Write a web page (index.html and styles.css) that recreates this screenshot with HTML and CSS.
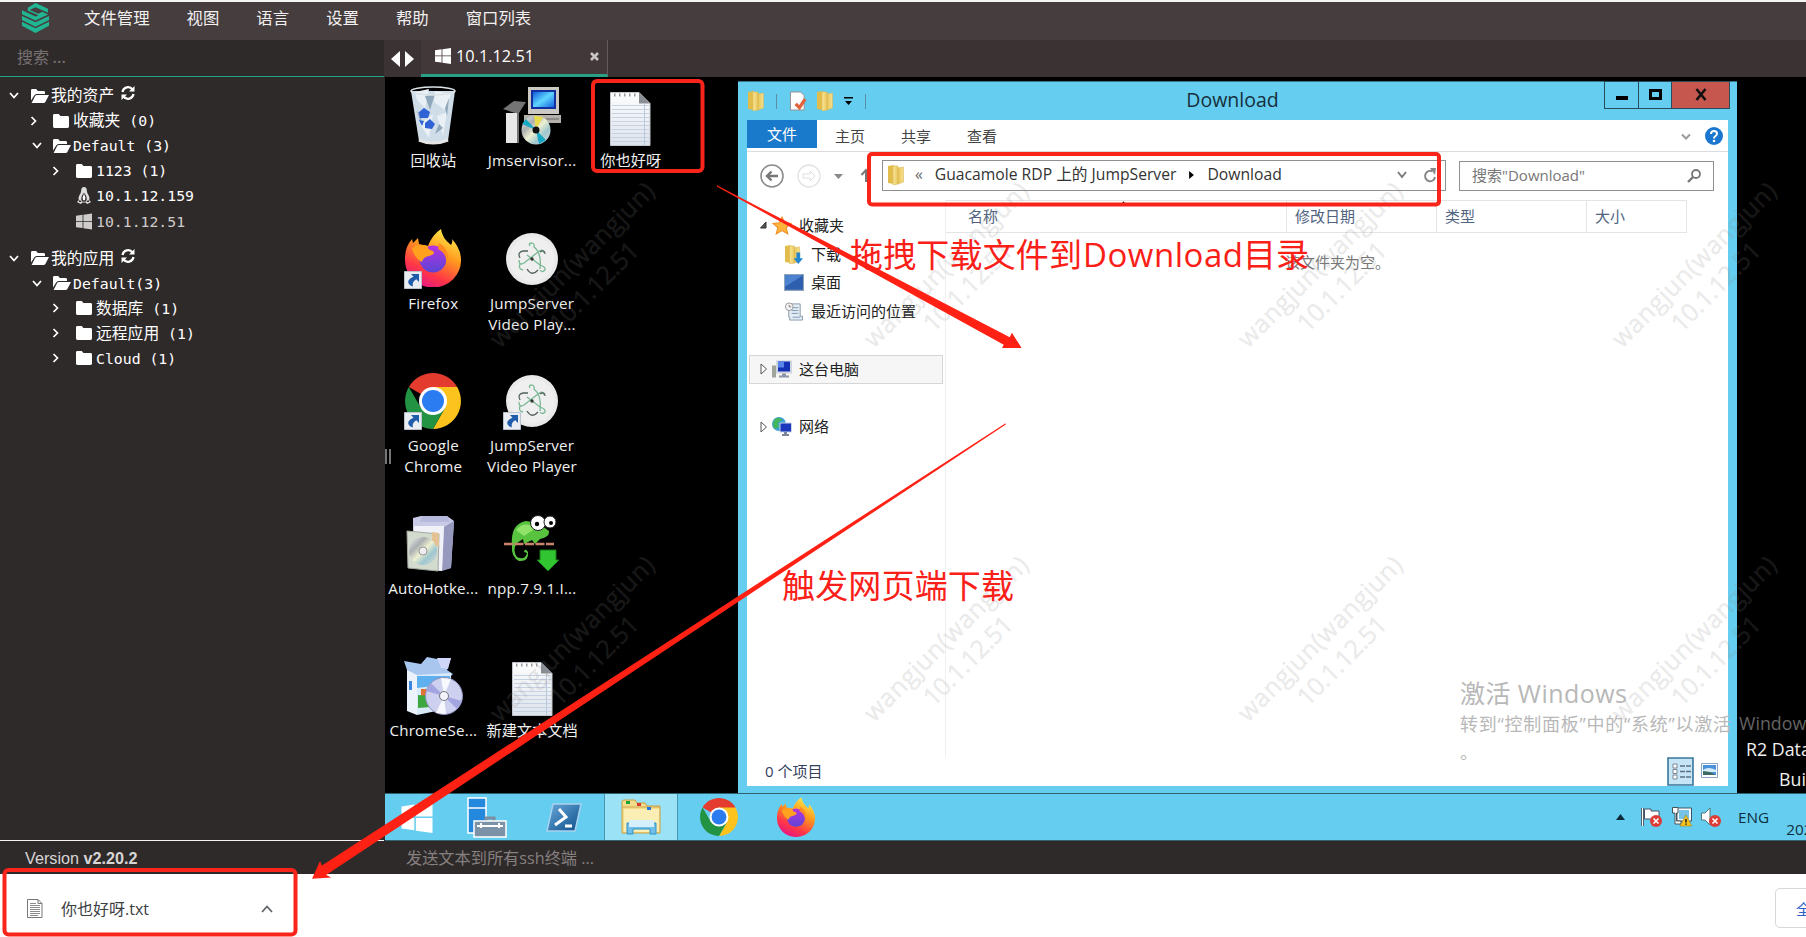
FILE: index.html
```html
<!DOCTYPE html>
<html lang="zh-CN">
<head>
<meta charset="utf-8">
<title>JumpServer Luna</title>
<link rel="stylesheet" href="styles.css">
</head>
<body>
<svg class="defs" width="0" height="0" aria-hidden="true">
  <defs>
    <linearGradient id="gFire" x1=".8" y1="0" x2=".3" y2="1"><stop offset="0" stop-color="#fff44f"/><stop offset=".4" stop-color="#ff9a1e"/><stop offset=".75" stop-color="#ff3647"/><stop offset="1" stop-color="#e31587"/></linearGradient>
    <linearGradient id="gGlobe" x1="0" y1="0" x2="0" y2="1"><stop offset="0" stop-color="#b833e1"/><stop offset="1" stop-color="#5a45d6"/></linearGradient>
    <linearGradient id="gFold" x1="0" y1="0" x2="1" y2="0"><stop offset="0" stop-color="#f8e69a"/><stop offset=".5" stop-color="#e9c658"/><stop offset="1" stop-color="#f6e093"/></linearGradient>
    <linearGradient id="gPaper" x1="0" y1="0" x2="0" y2="1"><stop offset="0" stop-color="#fdfdfd"/><stop offset="1" stop-color="#dde3ec"/></linearGradient>
    <linearGradient id="gScreen" x1="0" y1="0" x2="1" y2="1"><stop offset="0" stop-color="#0a50d8"/><stop offset=".5" stop-color="#5fd6ff"/><stop offset="1" stop-color="#0e58dd"/></linearGradient>
    <linearGradient id="gCd" x1="0" y1="0" x2="1" y2="1"><stop offset="0" stop-color="#f4f4f4"/><stop offset=".3" stop-color="#a9aeb0"/><stop offset=".5" stop-color="#eef0d0"/><stop offset=".7" stop-color="#9fc7cf"/><stop offset="1" stop-color="#d9d9d9"/></linearGradient>
    <linearGradient id="gPs" x1="0" y1="0" x2="1" y2="1"><stop offset="0" stop-color="#69a8d8"/><stop offset="1" stop-color="#0c4e8c"/></linearGradient>
    <symbol id="folder" viewBox="0 0 16 14"><path fill="#fff" d="M1.4 0h4.4l1.6 2h7.2q1.4 0 1.4 1.4v9.2q0 1.4-1.4 1.4H1.4Q0 14 0 12.600V1.4Q0 0 1.4 0z"/></symbol>
    <symbol id="folder-open" viewBox="0 0 18 14"><path fill="#fff" d="M0 11.500V1.400Q0 0 1.400 0H5.200L6.800 2H12.500Q14 2 14 3.400V5H5.500Q4 5 3.200 6.500z"/><path fill="#fff" d="M.6 14 4 7.200Q4.600 6 6 6H18L14.500 12.800Q13.900 14 12.500 14z"/></symbol>
    <symbol id="down" viewBox="0 0 10 7"><path d="M1 1l4 4.500L9 1" fill="none" stroke="#fff" stroke-width="1.800"/></symbol>
    <symbol id="right" viewBox="0 0 7 10"><path d="M1 1l4 4-4 4" fill="none" stroke="#fff" stroke-width="1.700"/></symbol>
    <symbol id="refresh" viewBox="0 0 14 14"><path d="M1.500 6A5.600 5.600 0 0 1 11.500 3.500M12.500 8A5.600 5.600 0 0 1 2.500 10.500" fill="none" stroke="#fff" stroke-width="2.200"/><path fill="#fff" d="M13.500 0V5.500H8zM.5 14V8.500H6z"/></symbol>
    <symbol id="win" viewBox="0 0 16 16"><path fill="currentColor" d="M0 2.300 6.600 1.300V7.500H0zM7.400 1.200 16 0V7.500H7.400zM0 8.300H6.600V14.600L0 13.700zM7.400 8.300H16V16L7.400 14.800z"/></symbol>
    <symbol id="shortcut" viewBox="0 0 18 18"><path fill="#e9edf2" stroke="#b9c3ce" d="M.5.5h17v17H.5z"/><path fill="#1f5ca9" d="M7 3h8v8l-2.700-2.700Q7.500 11 9 15.500 3 13.500 4.500 9.500 6 7 9.500 5.800z"/></symbol>
    <symbol id="chrome" viewBox="0 0 56 56"><path fill="#e33b2e" d="M28 28 3.800 14A28 28 0 0 1 52.200 14z"/><path fill="#fcc31e" d="M28 14H52.200A28 28 0 0 1 28 56L40 35z"/><path fill="#229342" d="M3.800 14 16 35 28 42 28 56A28 28 0 0 1 3.800 14z"/><path fill="#229342" d="M16 34 28 42 40 35 28 56z"/><circle cx="28" cy="28" r="14" fill="#fff"/><circle cx="28" cy="28" r="11" fill="#2b7cf0"/></symbol>
    <symbol id="firefox" viewBox="0 0 56 58"><path fill="url(#gFire)" d="M0 29Q0 18 7 10L8 14 13 9 14 15 23 17Q27 6 36 0 37 9 46 16 48 13 47 10 56 20 56 31A28 27 0 0 1 0 32z"/><circle cx="28" cy="30" r="13.500" fill="url(#gGlobe)"/><path fill="#ffa01f" d="M7 19Q14 14 23 17 22 21 28 22 31 25 24 27 18 28 17 33 9 29 7 19z"/><path fill="#ff8b20" d="M34 14Q47 22 41 36 43 25 33 20z"/></symbol>
    <symbol id="electron" viewBox="0 0 52 52"><circle cx="26" cy="26" r="26" fill="#e9e9e9"/><circle cx="26" cy="26" r="22.500" fill="#efefef"/><g fill="none" stroke="#79b894" stroke-width="1.300"><path d="M13 27Q13 33 18 30L32 19Q37 15 38 20M24 13Q22 10 26 10 29 11 28 14 36 20 34 36M17 37Q12 36 14 31M21 22 34 32Q40 34 39 37 36 40 34 37"/></g><g fill="none" stroke="#53635d" stroke-width="1.300"><path d="M14 25Q11 19 17 18L22 18M34 19Q39 16 39 21M21 36Q26 44 32 37"/></g><circle cx="26" cy="26" r="1.700" fill="#333"/></symbol>
    <symbol id="notepad" viewBox="0 0 41 54"><path fill="url(#gPaper)" stroke="#c2c6cc" d="M.5.5H29L40 11.500V53.500H.5z"/><path stroke="#c6d1e2" d="M2 13.500H39M2 17.500H39M2 21.500H39M2 25.500H39M2 29.500H39M2 33.500H39M2 37.500H39M2 41.500H39M2 45.500H39M2 49.500H39"/><path fill="#8a8f96" d="M29 .5 40 11.500H29z"/><path stroke="#b9c7de" d="M34.500 12V53"/><path d="M4 3h23" stroke="#999" stroke-width="3" stroke-dasharray="1.500 3.500"/></symbol>
    <symbol id="xfolder" viewBox="0 0 16 20"><path fill="#e3bd4c" d="M0 1 6 0V19L0 18z"/><path fill="url(#gFold)" stroke="#dcb955" stroke-width=".6" d="M5 1H10V19L5 20zM10 3 15.500 2V17L10 19z"/></symbol>
    <symbol id="err" viewBox="0 0 12 12"><circle cx="6" cy="6" r="6" fill="#dc3b36"/><path d="M3.500 3.500l5 5M8.500 3.500l-5 5" stroke="#fff" stroke-width="1.600"/></symbol>
  </defs>
</svg>

<div class="app">
  <nav class="menubar">
    <svg class="logo" viewBox="0 0 30 31"><g fill="#21b593"><path d="M15 0 28 6 28 10 15 4.500 9 7.200 18 11 22 9 28 12 15 18 1 11.500V7.500L15 14 18 12.700 7 8V5z"/><path d="M1 13.500 15 20 29 13.500V17.500L15 24.500 1 17.500z"/><path d="M1 19.500 15 26 29 19.500V23.500L15 31 1 23.500z"/></g></svg>
    <span>文件管理</span><span>视图</span><span>语言</span><span>设置</span><span>帮助</span><span>窗口列表</span>
  </nav>

  <div class="main">
    <aside class="sidebar">
      <div class="search">搜索 ...</div>
      <div class="tree">
        <div class="row"><svg class="chev"><use href="#down"/></svg><svg class="fo"><use href="#folder-open"/></svg><span>我的资产</span><svg class="rf"><use href="#refresh"/></svg></div>
        <div class="row l1"><svg class="chev r"><use href="#right"/></svg><svg class="fc"><use href="#folder"/></svg><span>收藏夹</span><code>&nbsp;(0)</code></div>
        <div class="row l1"><svg class="chev"><use href="#down"/></svg><svg class="fo"><use href="#folder-open"/></svg><code>Default (3)</code></div>
        <div class="row l2"><svg class="chev r"><use href="#right"/></svg><svg class="fc"><use href="#folder"/></svg><code>1123 (1)</code></div>
        <div class="row l2"><i class="chev"></i><svg class="os" viewBox="0 0 16 18"><path fill="#ddd" d="M8 0Q11 0 11 4 11 6 13 9 14.500 12 13.500 14L15.500 16 11.500 18 9.500 16.500H6.500L4.500 18 .5 16 2.500 14Q1.500 12 3 9 5 6 5 4 5 0 8 0z"/><path fill="#2f2a2a" d="M8 6Q10 8 10.800 11 11.500 14 9.500 15.500H6.500Q4.500 14 5.200 11 6 8 8 6zM3.500 13.500l2 2.500h-3zM12.500 13.500l-2 2.500h3z"/><path fill="#fff" d="M8 7l1.500 4-.5 3H7l-.5-3z"/></svg><code>10.1.12.159</code></div>
        <div class="row l2 off"><i class="chev"></i><svg class="os"><use href="#win"/></svg><code>10.1.12.51</code></div>
        <div class="row second"><svg class="chev"><use href="#down"/></svg><svg class="fo"><use href="#folder-open"/></svg><span>我的应用</span><svg class="rf"><use href="#refresh"/></svg></div>
        <div class="row l1"><svg class="chev"><use href="#down"/></svg><svg class="fo"><use href="#folder-open"/></svg><code>Default(3)</code></div>
        <div class="row l2"><svg class="chev r"><use href="#right"/></svg><svg class="fc"><use href="#folder"/></svg><span>数据库</span><code>&nbsp;(1)</code></div>
        <div class="row l2"><svg class="chev r"><use href="#right"/></svg><svg class="fc"><use href="#folder"/></svg><span>远程应用</span><code>&nbsp;(1)</code></div>
        <div class="row l2"><svg class="chev r"><use href="#right"/></svg><svg class="fc"><use href="#folder"/></svg><code>Cloud (1)</code></div>
      </div>
      <div class="version">Version&nbsp;<b>v2.20.2</b></div>
    </aside>

    <section class="content">
      <div class="tabs">
        <svg class="arrows" width="23" height="16" viewBox="0 0 23 16"><path fill="#fff" d="M0 8 9 0V16zM23 8 14 0V16z"/></svg>
        <div class="tab"><svg width="16" height="16" class="tabwin"><use href="#win"/></svg><span>10.1.12.51</span><svg class="close" width="8" height="9" viewBox="0 0 8 9"><path d="M0 1l7 7M7 1l-7 7" stroke="#c9c4c4" stroke-width="2.600"/></svg></div>
      </div>

      <div class="desktop">
        <div class="icons">
          <div class="icon" style="grid-area:1/1"><svg viewBox="0 0 56 60"><path fill="#cfdde8" d="M6 5H50L43 55Q28 61 14 55z"/><path fill="#eaf1f6" d="M10 6 24 3 20 22 12 14zM30 5 46 8 40 24 29 16zM15 38 28 28 24 52zM32 30 42 26 38 50z"/><path fill="#8fa7ba" d="M20 10 30 8 25 24zM40 22 44 12 42 30zM12 25 18 29 15 35zM34 38 30 48 38 42z"/><path fill="#2f63d6" d="M14 26 19 22 25 26 23 32 15 32zM20 37 25 33 30 38 27 43 20 42zM14 34l5 1-2 5z"/><ellipse cx="28" cy="5" rx="22" ry="4" fill="none" stroke="#dce3e6" stroke-width="1.600"/><path d="M14 54Q28 60 43 54" fill="none" stroke="#e5e5e5" stroke-width="3"/></svg><label>回收站</label></div>
          <div class="icon" style="grid-area:1/2"><svg viewBox="0 0 60 60"><path fill="#ccc8c2" d="M26 1H57V28H26z"/><path fill="url(#gScreen)" stroke="#1330a0" stroke-width="2" d="M30 5H53V22H30z"/><path fill="#b4b1ab" d="M22 29H59V37H22z"/><path stroke="#666" d="M44 33h13"/><path fill="#747474" d="M1 23 12 15 24 16 17 27V57H13V27z"/><path fill="#e8e8e8" d="M4 27H15V57H4z"/><circle cx="34" cy="44" r="14.500" fill="url(#gCd)"/><path fill="#16a7c4" d="M34 44 20 38 24 33zM34 44 37 58 44 54z"/><path fill="#e7dc4d" d="M34 44 32 29.500 41 31z"/><circle cx="34" cy="44" r="3.500" fill="#111"/></svg><label class="lat">Jmservisor...</label></div>
          <div class="icon" style="grid-area:1/3"><svg class="note"><use href="#notepad"/></svg><label>你也好呀</label></div>
          <div class="icon" style="grid-area:2/1"><svg viewBox="0 0 56 60"><use href="#firefox" width="56" height="58"/><use href="#shortcut" x="-1" y="42" width="18" height="18"/></svg><label class="lat">Firefox</label></div>
          <div class="icon" style="grid-area:2/2"><svg viewBox="0 0 56 60"><use href="#electron" x="2" y="4" width="52" height="52"/></svg><label class="lat">JumpServer<br>Video Play...</label></div>
          <div class="icon" style="grid-area:3/1"><svg viewBox="0 0 56 60"><use href="#chrome" y="2" width="56" height="56"/><use href="#shortcut" x="-1" y="41" width="18" height="18"/></svg><label class="lat">Google<br>Chrome</label></div>
          <div class="icon" style="grid-area:3/2"><svg viewBox="0 0 56 60"><use href="#electron" x="2" y="4" width="52" height="52"/><use href="#shortcut" x="-1" y="41" width="18" height="18"/></svg><label class="lat">JumpServer<br>Video Player</label></div>
          <div class="icon" style="grid-area:4/1"><svg viewBox="0 0 56 60"><path fill="#c9cbe6" d="M8 4 16 2H42L49 7 46 54 35 57 8 52z"/><path fill="#9698bd" d="M39 13 49 7 46 54 37 57z"/><path fill="#f1f1fa" d="M9 12H39L37 57 9 52z"/><path fill="#b7b9dc" d="M17 2H42L45 8H15z"/><path fill="#d3dbcf" stroke="#a4aaa0" d="M2 17 34 20 33 57 3 54z"/><path fill="#e5c294" d="M27 18 34 19V32H27z"/><circle cx="18" cy="37" r="14" fill="url(#gCd)"/><circle cx="18" cy="37" r="4" fill="#eee" stroke="#999"/></svg><label class="lat">AutoHotke...</label></div>
          <div class="icon" style="grid-area:4/2"><svg viewBox="0 0 56 60"><path fill="#57c33e" d="M8 32Q6 10 22 7 34 8 45 17 46 23 36 25L31 30 28 26 20 30 19 25 13 29Q8 36 13 43 21 47 23 39L20 38Q21 33 24 38 25 48 15 47 7 43 8 32z"/><path fill="#90e368" d="M12 16Q20 6 32 14L20 22z"/><path stroke="#c8836c" stroke-width="2.500" stroke-dasharray="9 1.500" d="M0 30H50"/><circle cx="34" cy="9" r="7.500" fill="#fff" stroke="#222"/><circle cx="46" cy="8" r="6" fill="#fff" stroke="#222"/><circle cx="33" cy="10" r="2.200"/><circle cx="47" cy="9" r="2"/><path fill="#32c532" stroke="#177c17" d="M36 36H52V46H55L44 57 33 46H36z"/></svg><label class="lat">npp.7.9.1.I...</label></div>
          <div class="icon" style="grid-area:5/1"><svg viewBox="0 0 60 60"><path fill="#a9c7ee" d="M1 5 18 8 24 1 34 3 48 2 44 14 50 18 46 22 6 20z"/><path fill="#edf3fb" d="M4 14 14 19V59L4 55z"/><path fill="#d9ebfa" d="M14 19 48 17V52L14 59z"/><path fill="#5fb0ee" d="M14 20H47V28L14 32z"/><path fill="#e27236" d="M18 33H30V42H18z"/><path fill="#3ba73e" d="M15 39 28 40V51L15 52z"/><path fill="#3a86dc" d="M6 25H9V34H6z"/><path fill="#cfd6f7" d="M34 2 48 2 45 13 38 12z"/><circle cx="41" cy="40" r="18.500" fill="#ced0ef" stroke="#8e91ba"/><path fill="#a3a5e0" d="M41 40 23 35 28 27zM41 40 59 45 54 53z"/><path fill="#f8f8ff" d="M41 40 38 22 48 23zM41 40 33 57 43 58z"/><circle cx="41" cy="40" r="4.500" fill="#f3f3fd" stroke="#777"/></svg><label class="lat">ChromeSe...</label></div>
          <div class="icon" style="grid-area:5/2"><svg class="note"><use href="#notepad"/></svg><label>新建文本文档</label></div>
        </div>
        <i class="handle"></i>

        <div class="build"><p>R2 Data</p><p class="b2">Build</p></div>

        <div class="window">
          <div class="titlebar">
            <svg class="qf"><use href="#xfolder"/></svg><i class="qsep"></i>
            <svg class="qdoc" viewBox="0 0 18 20"><path fill="#fff" stroke="#918e8e" d="M.5.500H11L15 4V19.500H.5z"/><path d="M6 13 10 17 16 8" fill="none" stroke="#e0633c" stroke-width="3.500"/></svg>
            <svg class="qf"><use href="#xfolder"/></svg>
            <svg class="qdrop" viewBox="0 0 9 8"><path d="M0 0H9V1.500H0zM1 4H8L4.500 8z"/></svg><i class="qsep q2"></i>
            <h1>Download</h1>
            <div class="winbtns"><b><svg width="12" height="10"><path d="M0 6h12v4H0z"/></svg></b><b><svg width="13" height="11"><path d="M1.500 1.500h10v8h-10z" fill="none" stroke="#000" stroke-width="3"/></svg></b><b class="x"><svg width="12" height="11" viewBox="0 0 12 11"><path d="M1.500 0 10.500 11M10.500 0 1.500 11" stroke="#111" stroke-width="2.600"/></svg></b></div>
          </div>
          <div class="client">
            <div class="ribbon"><span class="file">文件</span><span>主页</span><span>共享</span><span>查看</span>
              <svg class="rchev" viewBox="0 0 10 7"><path d="M1 1l4 4 4-4" fill="none" stroke="#9a9a9a" stroke-width="2"/></svg>
              <svg class="help" viewBox="0 0 18 18"><circle cx="9" cy="9" r="9" fill="#1b76cf"/><path d="M6 7Q6 4 9 4 12 4 12 6.500 12 8 10.500 9 9 10 9 11.500" fill="none" stroke="#fff" stroke-width="2"/><circle cx="9" cy="14" r="1.300" fill="#fff"/></svg>
            </div>
            <div class="address">
              <svg class="navbtns" viewBox="0 0 119 26"><g fill="none"><circle cx="13" cy="13" r="11" stroke="#8d8d8d" stroke-width="1.600"/><path d="M19 13H8M12.500 8.500 8 13l4.500 4.500" stroke="#777" stroke-width="2.400"/><circle cx="50" cy="13" r="11" stroke="#e2e2e2" stroke-width="1.300"/><path d="M44 11h7V8l5 5-5 5v-3h-7z" stroke="#dedede"/><path d="M107 19V8M102.500 12l4.500-5 4.500 5" stroke="#777" stroke-width="2"/></g><path fill="#888" d="M75 11h9l-4.500 5z"/></svg>
              <div class="path"><svg class="qf"><use href="#xfolder"/></svg><span class="raq">«</span><span class="p1">Guacamole RDP 上的 JumpServer</span><svg class="tri" viewBox="0 0 6 10"><path d="M0 0 6 5 0 10z"/></svg><span class="p2">Download</span>
                <svg class="pchev" viewBox="0 0 10 8"><path d="M1 1l4 5 4-5" fill="none" stroke="#7a7a7a" stroke-width="2"/></svg><svg class="reload" viewBox="0 0 14 15"><path d="M12 9A5 5.200 0 1 1 9.500 3.500" fill="none" stroke="#888" stroke-width="2"/><path fill="#888" d="M7 0 13 0 12 7z"/></svg></div>
              <div class="find"><span>搜索"Download"</span><svg viewBox="0 0 14 14"><circle cx="9" cy="5" r="4" fill="none" stroke="#777" stroke-width="1.800"/><path d="M6 8 1 13" stroke="#777" stroke-width="2.400"/></svg></div>
            </div>
            <div class="body">
              <div class="navpane">
                <div class="n"><svg class="ex" viewBox="0 0 7 8"><path d="M6 1V7H.5z" fill="#555" stroke="#333"/></svg><svg class="ni" viewBox="0 0 18 18"><path fill="#ffb53c" stroke="#ef8d27" d="M9 1 11.500 6.500 17.500 7 13 11 14.500 17 9 13.800 3.500 17 5 11 .5 7 6.500 6.500z"/></svg>收藏夹</div>
                <div class="n sub"><svg class="ni" viewBox="0 0 19 20"><use href="#xfolder" width="16" height="20"/><path fill="#2585ce" d="M12 8h4v6h3l-5 6-5-6h3z"/></svg>下载</div>
                <div class="n sub"><svg class="ni" viewBox="0 0 19 16"><path fill="#2e5fae" stroke="#8fa3bd" d="M.5.500H18.500V15.500H.5z"/><path fill="#4c83d1" d="M1 1H18L1 12z"/></svg>桌面</div>
                <div class="n sub"><svg class="ni" viewBox="0 0 19 20"><path fill="#e4edf4" stroke="#8b98a6" d="M4 2H16V15H18.500V19H5V16H4z"/><path d="M7 6h7M7 9h7M7 12h7M8 16h8" stroke="#7697b3"/><circle cx="4.500" cy="5" r="4" fill="#f4f4f4" stroke="#999"/><path d="M4.500 3v2h2" stroke="#777" fill="none"/></svg>最近访问的位置</div>
                <div class="n gap"></div>
                <div class="n sel"><svg class="ex" viewBox="0 0 7 10"><path d="M1 0V10L6.500 5z" fill="#fff" stroke="#555"/></svg><svg class="ni" viewBox="0 0 20 18"><path fill="#9fa59a" d="M0 5H4V17H0z"/><path fill="#d0d6e0" d="M4 0H20V13H4z"/><path fill="#1531b4" d="M6 1H18V11H6z"/><path fill="#5a85ea" d="M6 1h6v6H6z"/><path fill="#8c96a6" d="M10 13h4v2h3v2H7v-2h3z"/></svg>这台电脑</div>
                <div class="n gap"></div>
                <div class="n"><svg class="ex" viewBox="0 0 7 10"><path d="M1 0V10L6.500 5z" fill="#fff" stroke="#555"/></svg><svg class="ni" viewBox="0 0 20 19"><circle cx="7" cy="7" r="7" fill="#3ba0d8"/><path fill="#43b55a" d="M3 2Q8-1 10 3L6 6 7 10 3 12Q-1 7 3 2z"/><path fill="#1b38bd" stroke="#cad4e4" d="M8 6H19.500V15H8z"/><path fill="#7b879a" d="M12 15h3v2h2v2h-7v-2h2z"/></svg>网络</div>
              </div>
              <div class="files">
                <div class="cols"><span class="c1">名称<svg viewBox="0 0 6 4"><path d="M0 4 3 0 6 4z"/></svg></span><span class="c2">修改日期</span><span class="c2">类型</span><span class="c4">大小</span></div>
                <p class="empty">该文件夹为空。</p>
              </div>
            </div>
            <div class="status"><span>0 个项目</span>
              <svg class="vw on" viewBox="0 0 27 29"><path fill="#c6e5f6" stroke="#3a779b" stroke-width="1.600" d="M1 1H26V28H1z"/><g fill="#fff" stroke="#7e8794"><path d="M6 7h4v4H6zM6 12.500h4v4H6zM6 18h4v4H6z"/></g><path d="M13 9h11M13 14.500h11M13 20h11" stroke="#5c7186" stroke-width="1.600" stroke-dasharray="5 1"/></svg>
              <svg class="vw2" viewBox="0 0 17 15"><path fill="#fff" stroke="#8ba6c4" d="M.5.500H16.500V14.500H.5z"/><path fill="#4a92da" d="M2 2H15V12H2z"/><path fill="#d5ecf8" d="M2 7Q7 3 15 7V9H2z"/><path fill="#3b6c62" d="M2 8 9 9 15 12H2z"/></svg>
            </div>
          </div>
        </div>

        <div class="activate"><p class="a1">激活 Windows</p><p class="a2">转到“控制面板”中的“系统”以激活</p><p class="a2">。</p></div>
        <div class="activate2">Windows</div>

        <svg class="marks" width="1422" height="716" viewBox="384 77 1422 716">
          <defs><g id="mark"><text textLength="221">wangjun(wangjun)</text><text x="53" y="31" textLength="115">10.1.12.51</text></g></defs>
          <use href="#mark" transform="translate(500 349) rotate(-45)"/><use href="#mark" transform="translate(874 349) rotate(-45)"/><use href="#mark" transform="translate(1248 349) rotate(-45)"/><use href="#mark" transform="translate(1622 349) rotate(-45)"/>
          <use href="#mark" transform="translate(500 723) rotate(-45)"/><use href="#mark" transform="translate(874 723) rotate(-45)"/><use href="#mark" transform="translate(1248 723) rotate(-45)"/><use href="#mark" transform="translate(1622 723) rotate(-45)"/>
        </svg>
      </div>

      <div class="taskbar">
        <div class="tb start"><svg width="34" height="31"><use href="#win"/></svg></div>
        <div class="tb"><svg width="40" height="41" viewBox="0 0 40 41"><path fill="#2488dd" stroke="#fff" stroke-width="1.500" d="M1 1H19V36H1z"/><path stroke="#fff" stroke-width="1.500" d="M1 11H19"/><path fill="none" stroke="#7a8fa2" stroke-width="3" d="M19 25V21H27V25"/><path fill="#7b92a7" stroke="#fff" stroke-width="1.500" d="M7 24H39V40H7z"/><path stroke="#fff" stroke-width="2" d="M10 29H36M14 26V31M32 26V31"/></svg></div>
        <div class="tb"><svg width="36" height="29" viewBox="0 0 36 29"><path fill="url(#gPs)" stroke="#a8d2ee" stroke-width="1.500" d="M7 1H35L29 28H1z"/><path d="M13 6 20 14 9 22M19 23H26" fill="none" stroke="#fff" stroke-width="3"/></svg></div>
        <div class="tb active"><svg width="41" height="38" viewBox="0 0 41 38"><path fill="#f3dc8a" stroke="#c99f40" d="M1 4Q1 2 3 2H14L16 5H24L26 8H39V35H1z"/><path fill="#fbeeb5" d="M3 11H38V34H3z"/><path d="M1 9H39" stroke="#cea750"/><path fill="#18a53c" d="M5 3h4v3H5z"/><path fill="#d63a2b" d="M16 5h4v3h-4z"/><path fill="#2179d7" d="M26 9h4v3h-4z"/><path fill="#70bfe8" stroke="#2e92c8" d="M6 36V25H35V36H29V31H12V36z"/><path fill="#d5effc" d="M8 22H33V29H8z"/></svg></div>
        <div class="tb"><svg width="38" height="38"><use href="#chrome"/></svg></div>
        <div class="tb ff"><svg width="38" height="40"><use href="#firefox"/></svg></div>
        <div class="tray">
          <svg width="9" height="6"><path d="M0 6 4.500 0 9 6z" fill="#0d2a38"/></svg>
          <svg class="t1" width="21" height="20" viewBox="0 0 21 20"><path d="M1.500 1V19" stroke="#345" stroke-width="3"/><path d="M1.500 1V19" stroke="#fff" stroke-width="1.300"/><path fill="#fff" stroke="#456" d="M3.500 2H10V4H18V12H3.500z"/><use href="#err" x="9" y="8" width="12" height="12"/></svg>
          <svg class="t2" width="20" height="20" viewBox="0 0 20 20"><path fill="#77c3e6" stroke="#f5fbff" stroke-width="2" d="M6 2H18V13H6z"/><path fill="none" stroke="#334" stroke-width=".8" d="M5 1H19.500V14H5z"/><path fill="#fff" stroke="#455" d="M.5.500H6V6H4.500V14H9V17H3V6H.5z"/><path fill="#f7c51e" stroke="#a67e10" stroke-width=".6" d="M14 8 19.700 19H8z"/><path stroke="#222" stroke-width="1.600" d="M14 12v3.500M14 16.500v1.300"/></svg>
          <svg class="t3" width="20" height="20" viewBox="0 0 20 20"><path fill="#fff" stroke="#577" d="M.5 6H4L9 1V18L4 13H.5z"/><use href="#err" x="8" y="8" width="12" height="12"/></svg>
          <span>ENG</span>
          <div class="clock">202</div>
        </div>
      </div>
      <div class="cmd">发送文本到所有ssh终端 ...</div>
    </section>
  </div>
</div>

<footer class="downloads">
  <svg width="16" height="19" viewBox="0 0 16 19"><path fill="#fff" stroke="#777" d="M.5.500H11L15 4.500V18.500H.5z"/><path fill="none" stroke="#777" d="M11 .5V4.500H15"/><path stroke="#8a8a8a" d="M3 4.500h6M3 6.500h10M3 8.500h10M3 10.500h10M3 12.500h10M3 14.500h10M3 16.500h8"/></svg>
  <span>你也好呀.txt</span>
  <svg class="up" width="12" height="8" viewBox="0 0 12 8"><path d="M1 7l5-5.500L11 7" fill="none" stroke="#5f6368" stroke-width="1.800"/></svg>
  <button>全部显示</button>
</footer>

<svg class="notes" width="1806" height="937" viewBox="0 0 1806 937">
  <g fill="none" stroke="#f9241a" stroke-width="4"><rect x="593" y="81" width="109.500" height="90" rx="4"/><rect x="869" y="154" width="570" height="50.500" rx="3"/><rect x="4.500" y="870" width="291" height="64.500" rx="4"/></g>
  <g fill="#ff2114" stroke="#ff2114" stroke-width="1.200"><path d="M717 186 1010 338 1012 334 1020.500 347.500 1003 347.500 1004.500 344.500z"/><path d="M1005.500 424 325 875 329 877 313 878 320 862.500 321.500 866.500z"/></g>
  <g class="notetext"><text x="850" y="267" textLength="232">拖拽下载文件到</text><text x="1083" y="267" textLength="160">Download</text><text x="1243" y="267" textLength="66">目录</text><text x="782" y="598" textLength="232">触发网页端下载</text></g>
</svg>
</body>
</html>
```

FILE: styles.css
```css
* { box-sizing: border-box; }
body {
  margin: 0;
  width: 1806px;
  height: 937px;
  overflow: hidden;
  position: relative;
  background: #fff;
  font-family: "Open Sans", "Noto Sans CJK SC", sans-serif;
}
p, h1 { margin: 0; font-weight: 400; }
svg { display: block; flex: none; overflow: visible; }
.defs { position: absolute; }

/* application shell */
.app { height: 874px; padding-top: 2px; background: #f4f4f4; display: flex; flex-direction: column; }
.menubar {
  height: 38px;
  flex: none;
  display: flex;
  align-items: center;
  gap: 37px;
  padding: 0 0 8px 21px;
  background: #463d3e;
  color: #f2f0f0;
  font: 16.4px/30px "Noto Sans CJK SC", sans-serif;
}
.logo { width: 29px; height: 30px; margin: 2px -3px 0 0; }
.main { flex: 1; display: flex; min-height: 0; }

/* asset tree */
.sidebar { width: 384px; flex: none; display: flex; flex-direction: column; background: #2f2a2a; color: #fff; }
.search {
  height: 37px;
  padding-left: 17px;
  border-bottom: 1px solid #23a085;
  font: 16px/32px "Noto Sans CJK SC", sans-serif;
  color: #777172;
}
.tree { flex: 1; padding-top: 6px; }
.row { display: flex; align-items: center; height: 25.1px; padding-left: 9px; font: 15.8px/25px "Noto Sans CJK SC", sans-serif; white-space: nowrap; }
.row span { margin: -2px 0 0 0; }
.row.l1 { padding-left: 32px; }
.row.l2 { padding-left: 54px; }
.row.second { margin-top: 12px; }
.row code { font: 14.8px/25px "DejaVu Sans Mono", monospace; white-space: pre; }
.row.off { color: #cfcccc; }
.chev { width: 10px; height: 7px; margin-right: 12px; }
.l1 .chev { margin-right: 11px; }
.l2 .chev { margin-right: 12px; }
.chev.r { width: 10px; height: 10px; margin-left: -3px; }
.l1 .chev.r { margin-right: 14px; }
.l2 .chev.r { margin-right: 15px; }
.fo { width: 18px; height: 14px; margin-right: 2px; }
.fc { width: 16px; height: 14px; margin-right: 4px; }
.os { width: 16px; height: 17px; margin-right: 4px; }
.row .rf { width: 14px; height: 14px; margin: -5px 0 0 7px; }
.version { height: 34px; flex: none; border-top: 1px solid #f4f4f4; padding-left: 25px; color: #d8d5d5; font: 16.2px/34px "Liberation Sans", sans-serif; }

/* session area */
.content { flex: 1; min-width: 0; display: flex; flex-direction: column; background: #2f2a2a; }
.tabs { height: 37px; flex: none; display: flex; align-items: center; padding-left: 7px; background: #3b3333; }
.arrows { margin-right: 7px; }
.tab { width: 187px; height: 37px; display: flex; align-items: center; padding: 0 8px 3px 14px; border-bottom: 3px solid #2aa086; border-right: 1px solid #655d5d; color: #fff; background: #423839; }
.tab span { margin-left: 5px; font-size: 16.3px; line-height: 22px; }
.tab .close { margin: 2px 0 0 auto; }
.desktop { flex: 1; position: relative; overflow: hidden; background: #000; border-left: 1px solid #2f2a2a; }
.icons { display: grid; grid-template-columns: repeat(3, 98.7px); grid-template-rows: repeat(5, 142.6px); padding-top: 9px; margin-left: -1px; }
.icon { display: flex; flex-direction: column; align-items: center; }
.icon svg { width: 60px; height: 60px; }
.icon svg.note { width: 41px; height: 54px; margin: 6px 0 0; }
.icon label { margin-top: 4px; color: #f0f0f0; font-size: 15.2px; line-height: 21px; text-align: center; white-space: nowrap; }
.icon .lat { letter-spacing: .2px; }
.handle { position: absolute; left: 0; top: 372px; width: 6px; height: 15px; border: solid #777; border-width: 0 2px; }

/* explorer window */
.window { position: absolute; left: 353px; top: 4px; width: 999px; height: 712px; background: #65cdef; border-top: 1px solid #3a7389; padding: 0 9px 7px; display: flex; flex-direction: column; }
.titlebar { height: 38px; flex: none; display: flex; align-items: center; position: relative; }
.qf { width: 16px; height: 20px; }
.titlebar svg { margin-bottom: 1px; }
.titlebar .qf:first-child { margin-left: 1px; }
.qsep { width: 1px; height: 15px; margin: 0 12px; background: #5b8fa6; }
.q2 { margin: 0 0 0 12px; }
.qdoc { width: 17px; height: 20px; margin: 0 10px 0 1px; }
.qdrop { width: 9px; height: 8px; margin-left: 11px; }
h1 { position: absolute; left: 0; right: 0; top: 3px; text-align: center; font-size: 19.5px; line-height: 30px; color: #16303b; padding-right: 10px; }
.winbtns { position: absolute; right: -2px; top: -1px; display: flex; height: 28px; border: 1px solid #274d5c; }
.winbtns b { width: 34px; display: flex; align-items: center; justify-content: center; border-right: 1px solid #274d5c; }
.winbtns b:nth-child(2) { width: 33px; }
.winbtns b.x { width: 57px; background: #c6574f; border: 0; }
.client { flex: 1; display: flex; flex-direction: column; background: #fff; min-height: 0; font-family: "Open Sans", "Noto Sans CJK SC", sans-serif; }
.ribbon { height: 32px; flex: none; display: flex; align-items: flex-start; border-bottom: 1px solid #dcdcdc; color: #444; font-size: 15px; line-height: 33px; padding-right: 5px; }
.ribbon span { width: 66px; text-align: center; }
.ribbon .file { width: 70px; background: #1979ca; color: #fff; line-height: 28px; }
.ribbon .rchev { width: 10px; height: 8px; margin: 13px 14px 0 auto; }
.ribbon .help { width: 18px; height: 18px; margin-top: 7px; }
.address { height: 48px; flex: none; display: flex; align-items: center; padding-right: 14px; }
.navbtns { width: 119px; height: 26px; margin: 0 4px 0 12px; }
.path { width: 564px; height: 31px; margin-bottom: 2px; border: 1px solid #8f8f8f; display: flex; align-items: center; padding: 0 8px 0 5px; color: #333; white-space: nowrap; }
.path span { font-size: 15.7px; line-height: 26px; margin-top: -2px; }
.path .raq { margin: -2px 12px 0 11px; color: #666; }
.path .tri { width: 5px; height: 8px; margin: 0 13px; }
.pchev { width: 10px; height: 8px; margin-left: auto; }
.reload { width: 14px; height: 15px; margin-left: 16px; }
.find { width: 255px; height: 30px; margin-left: auto; border: 1px solid #8f8f8f; display: flex; align-items: center; justify-content: space-between; padding: 0 12px; font-size: 15px; color: #777; }
.find span { margin-top: -3px; }
.find svg { width: 14px; height: 14px; }
.body { flex: 1; display: flex; min-height: 0; }
.navpane { width: 199px; padding-top: 11px; border-right: 1px solid #f0f0f0; color: #222; }
.n { height: 28.8px; display: flex; align-items: center; padding-left: 13px; font-size: 15px; line-height: 27px; white-space: nowrap; }
.n .ex { width: 7px; height: 10px; margin-right: 5px; }
.ni { width: 20px; height: 19px; margin-right: 7px; }
.n.sub { padding-left: 37px; }
.n.sel { margin: 0 2px; padding-left: 10px; border: 1px solid #d6d6d6; background: #f6f6f6; }
.files { flex: 1; }
.cols { display: flex; width: 741px; height: 33px; border: 1px solid #e4e4e4; border-left: 0; color: #50637f; font-size: 15px; line-height: 30px; }
.cols span { border-right: 1px solid #e4e4e4; padding-left: 8px; }
.cols .c1 { width: 341px; padding-left: 22px; position: relative; }
.c1 svg { position: absolute; left: 175px; top: 0; width: 5px; height: 4px; }
.cols .c2 { width: 150px; }
.cols .c4 { border: 0; }
.empty { margin: 17px 0 0 339px; font-size: 15px; line-height: 24px; color: #777; }
.status { height: 29px; flex: none; display: flex; align-items: center; padding: 0 10px 0 18px; font-size: 15px; color: #33415f; }
.status span { flex: 1; margin-top: -2px; }
.vw { width: 27px; height: 29px; margin-right: 7px; }
.vw2 { width: 17px; height: 15px; margin-bottom: 2px; }

.build { position: absolute; left: 1361px; top: 657px; width: 80px; color: #f0f0f0; font-size: 17.8px; line-height: 30px; white-space: nowrap; }
.build .b2 { padding-left: 33px; }
.activate { position: absolute; left: 1075px; top: 599px; color: #b8b8b8; }
.a1 { font-size: 25px; line-height: 34px; letter-spacing: .45px; }
.a2 { font-size: 18px; line-height: 28px; letter-spacing: .75px; white-space: nowrap; }
.activate2 { position: absolute; left: 1354px; top: 631px; color: #636363; font-size: 17.8px; line-height: 31px; }
.marks { position: absolute; left: -1px; top: 0; }
.marks text { font: 25px "Open Sans", sans-serif; fill: rgba(140, 140, 140, .17); stroke: rgba(140, 140, 140, .08); }

/* taskbar */
.taskbar { height: 48px; flex: none; margin-left: 1px; display: flex; background: #65cdef; border-top: 1px solid #31606f; border-bottom: 1px solid #31606f; overflow: hidden; }
.tb { width: 77px; display: flex; align-items: center; justify-content: center; }
.tb.start { width: 63px; color: #fff; }
.start use { width: 34px; height: 31px; }
.tb.active { width: 74px; margin-left: 2px; background: #9ce2f6; border: solid #4796ae; border-width: 0 1px; }
.tb.active + .tb { width: 81px; }
.tb.ff { width: 74px; }
.tray { margin-left: auto; width: 190px; flex: none; display: flex; align-items: center; color: #0e2f3e; font-size: 15.3px; white-space: nowrap; }
.t1 { margin-left: 16px; }
.t2 { margin-left: 10px; }
.t3 { margin-left: 9px; }
.tray span { margin-left: 17px; }
.clock { padding-top: 24px; margin-left: 17px; }
.cmd { height: 33px; flex: none; padding-left: 22px; color: #858080; font: 16.2px/34px "Open Sans", "Noto Sans CJK SC", sans-serif; }

/* browser download shelf */
.downloads { height: 63px; display: flex; align-items: center; padding: 6px 0 0 27px; background: #fff; color: #3c4043; overflow: hidden; }
.downloads span { flex: none; width: 200px; margin-left: 18px; font-size: 16px; line-height: 24px; }
.downloads button { flex: none; width: 100px; height: 40px; margin: -1px 0 0 1502px; padding: 0 0 0 20px; border: 1px solid #d5d7db; border-radius: 5px; background: #fff; color: #2a62c9; font: 15px "Noto Sans CJK SC", sans-serif; text-align: left; white-space: nowrap; }

/* annotations drawn over everything */
.notes { position: absolute; left: 0; top: 0; pointer-events: none; }
.notetext text { font: 33px "Open Sans", "Noto Sans CJK SC", sans-serif; fill: #fa2018; stroke: none; }
```
